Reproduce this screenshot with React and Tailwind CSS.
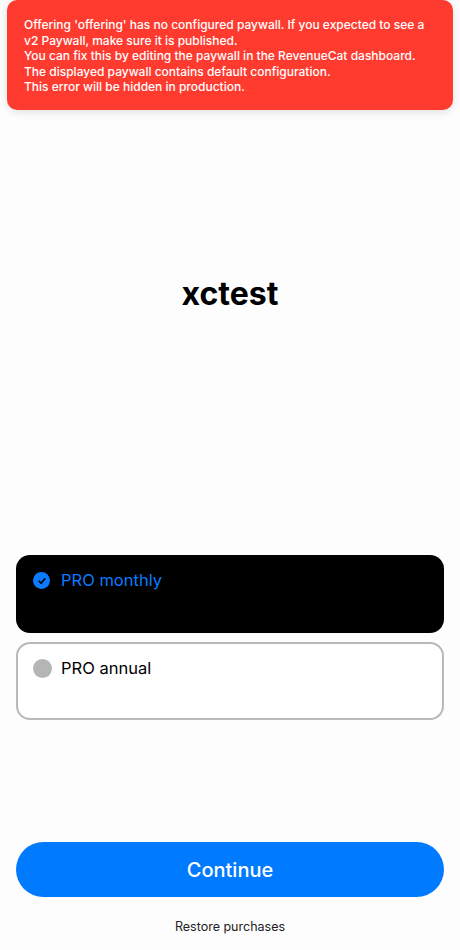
export default function App() {
  return (
    <div
      className="w-[460px] h-[950px] bg-[#fdfdfd] flex flex-col overflow-hidden relative"
      style={{ fontFamily: 'Inter, "Liberation Sans", sans-serif' }}
    >
      <div className="mx-[7px] mt-0 h-[110px] rounded-[10px] bg-[#ff3b30] shadow-[0_2px_8px_rgba(0,0,0,0.12)] pl-[17px] pr-[22px] pt-[17px] text-white text-[12px] font-medium leading-[15.6px]">
        <p>Offering 'offering' has no configured paywall. If you expected to see a v2 Paywall, make sure it is published.</p>
        <p>You can fix this by editing the paywall in the RevenueCat dashboard.</p>
        <p>The displayed paywall contains default configuration.</p>
        <p>This error will be hidden in production.</p>
      </div>

      <div className="h-[165px]" />
      <h1 className="text-center text-[32px] font-bold text-black leading-[38px]">xctest</h1>

      <div className="h-[242px]" />
      <div className="mx-4 flex flex-col gap-[9px]">
        <div className="h-[78px] rounded-[14px] bg-black px-[17px] pt-[17px] flex items-start gap-[11px]">
          <div className="w-[17px] h-[17px] rounded-full bg-[#0a7aff] flex items-center justify-center">
            <svg width="10" height="10" viewBox="0 0 10 10">
              <path d="M2.2 5.2 L4.1 7.1 L7.8 2.9" fill="none" stroke="black" strokeWidth="1.6" strokeLinecap="round" strokeLinejoin="round" />
            </svg>
          </div>
          <span className="text-[16.5px] leading-[18px] text-[#0a7aff] font-normal -mt-[1px]">PRO monthly</span>
        </div>
        <div className="h-[78px] rounded-[14px] border-2 border-[#b9b9b9] bg-white px-[15px] pt-[15px] flex items-start gap-[9px]">
          <div className="w-[19px] h-[19px] rounded-full bg-[#b5b5b5]" />
          <span className="text-[16.5px] leading-[18px] text-black font-normal">PRO annual</span>
        </div>
      </div>

      <div className="h-[122px]" />
      <button className="mx-4 h-[55px] rounded-full bg-[#007aff] text-white text-[20px] font-medium">
        Continue
      </button>
      <div className="mt-[21px] text-center text-[12.5px] text-[#222] font-normal">Restore purchases</div>
    </div>
  );
}
